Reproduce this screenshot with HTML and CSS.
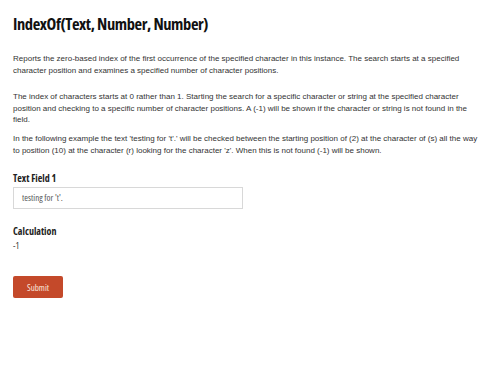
FILE: index.html
```html
<!DOCTYPE html>
<html>
<head>
<meta charset="utf-8">
<link rel="stylesheet" href="styles.css">
</head>
<body>
<div class="page">
  <h1 class="title">IndexOf(Text, Number, Number)</h1>
  <p class="text first">Reports the zero-based index of the first occurrence of the specified character in this instance. The search starts at a specified character position and examines a specified number of character positions.</p>
  <p class="text gap">The index of characters starts at 0 rather than 1. Starting the search for a specific character or string at the specified character position and checking to a specific number of character positions. A (-1) will be shown if the character or string is not found in the field.</p>
  <p class="text">In the following example the text 'testing for 't'.' will be checked between the starting position of (2) at the character of (s) all the way to position (10) at the character (r) looking for the character 'z'. When this is not found (-1) will be shown.</p>
  <div class="field">
    <label class="label">Text Field 1</label>
    <div class="input">testing for 't'.</div>
  </div>
  <div class="field calc">
    <div class="label">Calculation</div>
    <div class="value">-1</div>
  </div>
  <button class="submit">Submit</button>
</div>
</body>
</html>
```
FILE: styles.css
```css
html, body {
  margin: 0;
  padding: 0;
  background: #ffffff;
}
.page {
  padding: 13px 13px 0 13px;
  width: 472px;
}
.title, .label, .input, .value, .submit {
  font-family: "Open Sans", "DejaVu Sans Condensed", sans-serif;
  font-stretch: 75%;
}
.title {
  font-weight: 700;
  font-size: 16.5px;
  letter-spacing: -0.4px;
  line-height: 22px;
  margin: 0 0 18px 0;
  color: #111111;
}
.text {
  font-family: "Liberation Sans", Arial, sans-serif;
  font-size: 8px;
  line-height: 11.6px;
  color: #333333;
  margin: 0 0 7px 0;
}
.text.first {
  margin-bottom: 15px;
}
.field {
  margin-top: 16px;
}
.label {
  display: block;
  font-weight: 700;
  font-size: 10px;
  line-height: 12px;
  color: #222222;
  margin-bottom: 3px;
}
.input {
  width: 230px;
  height: 22px;
  box-sizing: border-box;
  border: 1px solid #d8d8d8;
  padding: 0 8px;
  font-size: 9px;
  line-height: 20px;
  color: #555555;
}
.calc {
  margin-top: 16px;
}
.value {
  font-size: 9px;
  line-height: 12px;
  margin-top: 1px;
  color: #333333;
}
.submit {
  display: block;
  margin-top: 24px;
  width: 50px;
  height: 22px;
  background: #c4492a;
  border: none;
  border-radius: 2px;
  color: #fbe6dd;
  font-size: 9px;
  padding: 0;
}
```
